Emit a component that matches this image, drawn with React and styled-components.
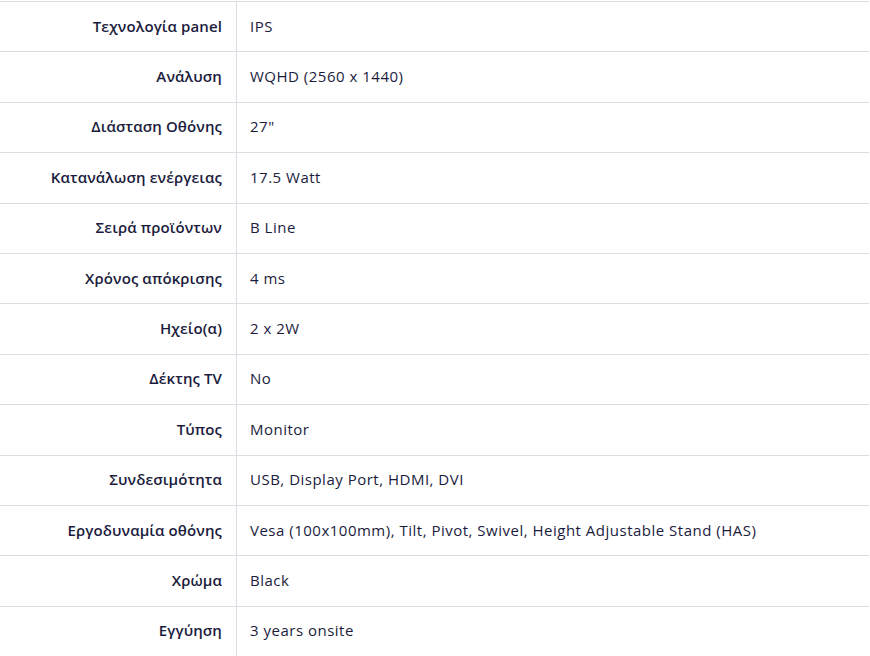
import React from "react"
import styled, { createGlobalStyle } from "styled-components"

const GlobalStyle = createGlobalStyle`
*{
  margin:0;
  padding:0;
  box-sizing:border-box;
}
body{
  background:#fff;
  font-family:"Open Sans",Lato,sans-serif;
  color:#1b1c3d;
}
`

const Table = styled.div`
width:869px;
padding-top:1px;
display:flex;
flex-direction:column;
`

const Row = styled.div`
display:grid;
grid-template-columns:237px 1fr;
height:50.4px;
border-top:1px solid #dcdce3;
`

const Label = styled.div`
display:flex;
align-items:center;
justify-content:flex-end;
padding-right:14px;
padding-bottom:2px;
font-weight:600;
font-size:15px;
letter-spacing:0.1px;
border-right:1px solid #dcdce3;
`

const Value = styled.div`
display:flex;
align-items:center;
padding-left:13px;
padding-bottom:2px;
font-size:15px;
letter-spacing:0.5px;
`

const specs = [
  ["Τεχνολογία panel", "IPS"],
  ["Ανάλυση", "WQHD (2560 x 1440)"],
  ["Διάσταση Οθόνης", "27\""],
  ["Κατανάλωση ενέργειας", "17.5 Watt"],
  ["Σειρά προϊόντων", "B Line"],
  ["Χρόνος απόκρισης", "4 ms"],
  ["Ηχείο(α)", "2 x 2W"],
  ["Δέκτης TV", "No"],
  ["Τύπος", "Monitor"],
  ["Συνδεσιμότητα", "USB, Display Port, HDMI, DVI"],
  ["Εργοδυναμία οθόνης", "Vesa (100x100mm), Tilt, Pivot, Swivel, Height Adjustable Stand (HAS)"],
  ["Χρώμα", "Black"],
  ["Εγγύηση", "3 years onsite"],
]

export default function App() {
  return (
    <>
      <GlobalStyle />
      <Table>
        {specs.map(([k, v]) => (
          <Row key={k}>
            <Label>{k}</Label>
            <Value>{v}</Value>
          </Row>
        ))}
      </Table>
    </>
  )
}
